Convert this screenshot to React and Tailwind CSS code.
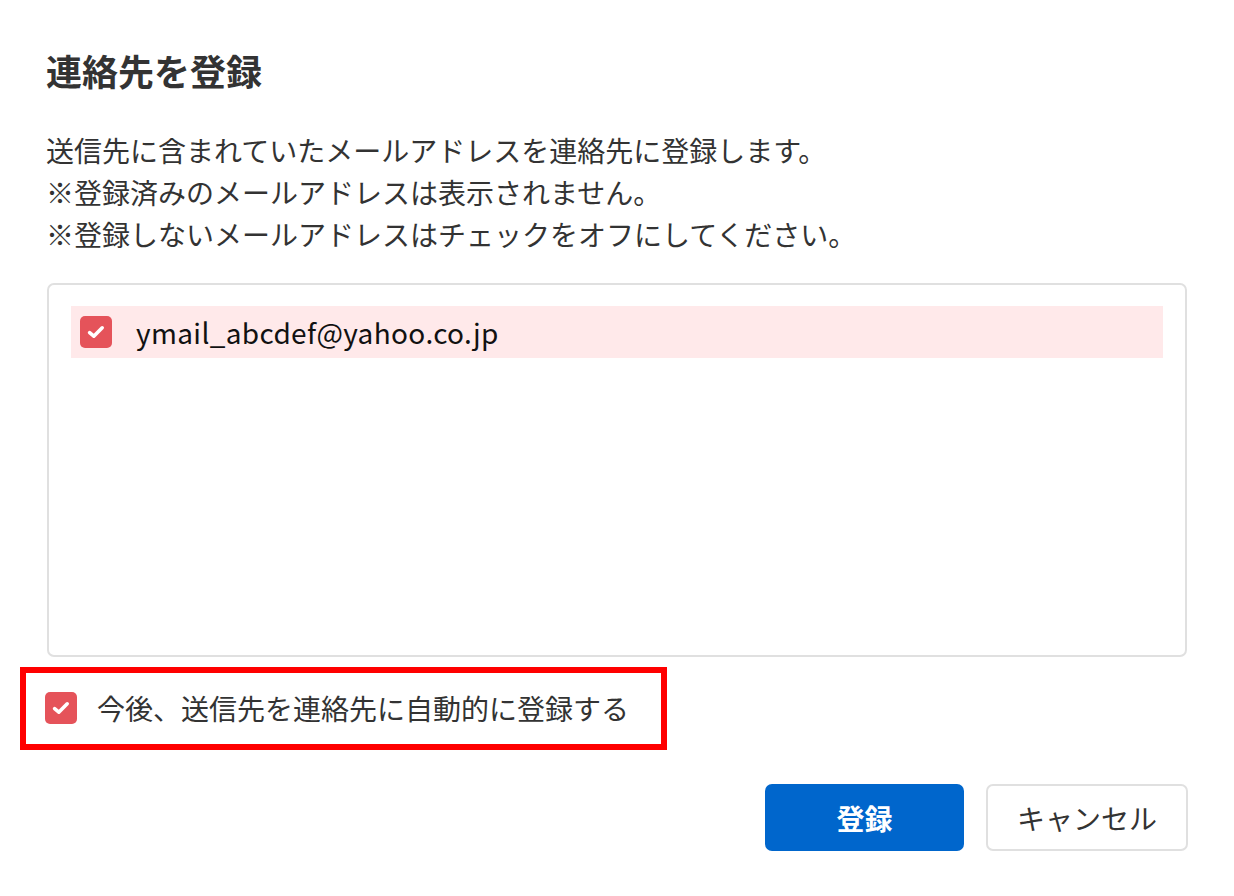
import { useState } from 'react'

const font = { fontFamily: '"Noto Sans CJK JP", "Noto Sans", sans-serif' }

function CheckBox({ checked, onChange }) {
  return (
    <button
      type="button"
      onClick={onChange}
      className={
        checked
          ? 'flex h-[32px] w-[32px] shrink-0 items-center justify-center rounded-[5px] bg-[#e5535a]'
          : 'flex h-[32px] w-[32px] shrink-0 items-center justify-center rounded-[5px] border-2 border-[#bbbbbb] bg-white'
      }
    >
      {checked && (
        <svg width="20" height="20" viewBox="0 0 20 20" fill="none">
          <path d="M3.6 10.6 L7.8 14.2 L16.2 5.8" stroke="#ffffff" strokeWidth="3.6" strokeLinecap="round" strokeLinejoin="round" />
        </svg>
      )}
    </button>
  )
}

export default function App() {
  const [addresses, setAddresses] = useState([
    { email: 'ymail_abcdef@yahoo.co.jp', checked: true }
  ])
  const [autoRegister, setAutoRegister] = useState(true)

  const toggleAddress = (index) => {
    setAddresses(prev => prev.map((a, i) => (i === index ? { ...a, checked: !a.checked } : a)))
  }

  return (
    <div className="min-h-screen w-[1234px] bg-white px-[46px] pt-[43px] text-[#333333]" style={font}>
      <h1 className="text-[36px] font-bold leading-[54px]">連絡先を登録</h1>

      <div className="mt-[32px] text-[28px] leading-[42px]">
        <p>送信先に含まれていたメールアドレスを連絡先に登録します。</p>
        <p>※登録済みのメールアドレスは表示されません。</p>
        <p>※登録しないメールアドレスはチェックをオフにしてください。</p>
      </div>

      {/* 登録候補のメールアドレス一覧 */}
      <div className="ml-[1px] mt-[28px] h-[374px] w-[1140px] rounded-[7px] border-2 border-[#e0e0e0] px-[22px] pt-[21px]">
        {addresses.map((a, i) => (
          <div
            key={a.email}
            className={
              a.checked
                ? 'flex h-[52px] items-center gap-[24px] bg-[#ffe9ea] pl-[9px]'
                : 'flex h-[52px] items-center gap-[24px] pl-[9px]'
            }
          >
            <CheckBox checked={a.checked} onChange={() => toggleAddress(i)} />
            <span className="text-[28px] tracking-[0.35px] text-[#111111]">{a.email}</span>
          </div>
        ))}
      </div>

      <div className="relative mt-[25px] flex h-[52px] w-fit items-center gap-[20px]">
        <div className="-ml-[1px]">
          <CheckBox checked={autoRegister} onChange={() => setAutoRegister(!autoRegister)} />
        </div>
        <span className="text-[28px] leading-[42px]">今後、送信先を連絡先に自動的に登録する</span>
        <div className="pointer-events-none absolute left-[-26px] top-[-15px] h-[83px] w-[647px] border-[6px] border-[#ff0000]" />
      </div>

      <div className="mt-[50px] flex justify-end gap-[22px]">
        <button className="h-[67px] w-[199px] rounded-[7px] bg-[#0066cc] text-[28px] font-bold text-white">
          登録
        </button>
        <button className="h-[67px] w-[202px] rounded-[7px] border-2 border-[#e0e0e0] bg-white text-[28px] text-[#333333]">
          キャンセル
        </button>
      </div>
    </div>
  )
}
